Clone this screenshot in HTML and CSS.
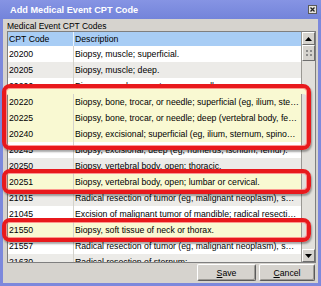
FILE: index.html
```html
<!DOCTYPE html>
<html lang="en">
<head>
    <meta charset="UTF-8">
    <title>Add Medical Event CPT Code</title>
    <link rel="stylesheet" href="styles.css">
</head>
<body>
    <div class="screen">
        <div class="window">
            <div class="titlebar">
                <span class="title">Add Medical Event CPT Code</span>
                <span class="close">
                    <svg width="9" height="9" viewBox="0 0 9 9">
                        <rect x="0.5" y="0.5" width="8" height="8" fill="#e4e2dc" stroke="#5a5a5a"/>
                        <path d="M2.5 2.5 L6.5 6.5 M6.5 2.5 L2.5 6.5" stroke="#222" stroke-width="1.3"/>
                    </svg>
                </span>
            </div>
            <div class="content">
                <div class="group-label">Medical Event CPT Codes</div>
                <div class="table">
                    <div class="grid">
                        <div class="head">
                            <div class="col-code">CPT Code</div>
                            <div class="col-desc">Description</div>
                        </div>
                        <div class="rows">
                            <div class="row"><div class="col-code">20200</div><div class="col-desc">Biopsy, muscle; superficial.</div></div>
                            <div class="row"><div class="col-code">20205</div><div class="col-desc">Biopsy, muscle; deep.</div></div>
                            <div class="row"><div class="col-code">20206</div><div class="col-desc">Biopsy, muscle, percutaneous needle.</div></div>
                            <div class="row marked"><div class="col-code">20220</div><div class="col-desc">Biopsy, bone, trocar, or needle; superficial (eg, ilium, sternum, spinous process, ribs).</div></div>
                            <div class="row marked"><div class="col-code">20225</div><div class="col-desc">Biopsy, bone, trocar, or needle; deep (vertebral body, femur).</div></div>
                            <div class="row marked"><div class="col-code">20240</div><div class="col-desc">Biopsy, excisional; superficial (eg, ilium, sternum, spinous process, ribs).</div></div>
                            <div class="row"><div class="col-code">20245</div><div class="col-desc">Biopsy, excisional; deep (eg, humerus, ischium, femur).</div></div>
                            <div class="row"><div class="col-code">20250</div><div class="col-desc">Biopsy, vertebral body, open; thoracic.</div></div>
                            <div class="row marked"><div class="col-code">20251</div><div class="col-desc">Biopsy, vertebral body, open; lumbar or cervical.</div></div>
                            <div class="row"><div class="col-code">21015</div><div class="col-desc">Radical resection of tumor (eg, malignant neoplasm), soft tissue of face or scalp.</div></div>
                            <div class="row"><div class="col-code">21045</div><div class="col-desc">Excision of malignant tumor of mandible; radical resection.</div></div>
                            <div class="row marked"><div class="col-code">21550</div><div class="col-desc">Biopsy, soft tissue of neck or thorax.</div></div>
                            <div class="row"><div class="col-code">21557</div><div class="col-desc">Radical resection of tumor (eg, malignant neoplasm), soft tissue of neck or thorax.</div></div>
                            <div class="row"><div class="col-code">21630</div><div class="col-desc">Radical resection of sternum;</div></div>
                        </div>
                    </div>
                    <div class="scrollbar">
                        <div class="arrow">
                            <svg width="7" height="4" viewBox="0 0 7 4"><path d="M3.5 0 L7 4 L0 4 Z" fill="#000"/></svg>
                        </div>
                        <div class="thumb">
                            <svg width="6" height="6" viewBox="0 0 6 6" fill="#8a8a8a">
                                <rect x="0" y="0" width="2" height="2"/><rect x="4" y="0" width="2" height="2"/>
                                <rect x="0" y="4" width="2" height="2"/><rect x="4" y="4" width="2" height="2"/>
                            </svg>
                        </div>
                        <div class="track"></div>
                        <div class="arrow">
                            <svg width="7" height="4" viewBox="0 0 7 4"><path d="M0 0 L7 0 L3.5 4 Z" fill="#000"/></svg>
                        </div>
                    </div>
                </div>
                <div class="buttons">
                    <button class="btn btn-save"><u>S</u>ave</button>
                    <button class="btn btn-cancel"><u>C</u>ancel</button>
                </div>
            </div>
        </div>

        <!-- annotation boxes drawn over the list -->
        <div class="mark mark-1"></div>
        <div class="mark mark-2"></div>
        <div class="mark mark-3"></div>
    </div>
</body>
</html>
```

FILE: styles.css
```css
* {
    box-sizing: border-box;
}
body {
    margin: 0;
    font-family: "Liberation Sans", Arial, sans-serif;
    font-size: 8.5px;
    color: #000;
}
.screen {
    position: relative;
    width: 321px;
    height: 286px;
    overflow: hidden;
}
.window {
    width: 321px;
    height: 286px;
    display: flex;
    flex-direction: column;
    background: #d6d3ce;
    border: 3px solid #7c88dc;
    border-top: 0;
}
.titlebar {
    height: 19px;
    margin: 0 -3px;
    padding: 0 4px 0 10px;
    display: flex;
    align-items: center;
    justify-content: space-between;
    background: linear-gradient(#8694e4, #7384da);
}
.title {
    color: #fff;
    font-weight: bold;
    font-size: 9.2px;
}
.close {
    display: flex;
    margin-top: -1px;
}
.content {
    flex: 1;
    display: flex;
    flex-direction: column;
    padding: 0 2px 0 4px;
}
.group-label {
    height: 12px;
    line-height: 12px;
    padding-top: 1px;
}
.table {
    height: 232px;
    display: flex;
    border: 1px solid #7f7f7f;
    background: #fff;
    font-size: 8.7px;
}
.grid {
    flex: 1;
    min-width: 0;
    overflow: hidden;
}
.head {
    height: 14px;
    display: flex;
    background: #a8cdf5;
    line-height: 14px;
}
.head .col-code {
    border-right: 1px solid #e8f2fc;
}
.row {
    height: 16px;
    display: flex;
    line-height: 16px;
    background: #fff;
}
.row:nth-child(even) {
    background: #ecebe8;
}
.row.marked {
    background: #f9f9d2;
}
.col-code {
    width: 66px;
    flex: none;
    padding-left: 1px;
    border-right: 1px solid #d4d2cc;
}
.col-desc {
    flex: 1;
    min-width: 0;
    padding-left: 1px;
    padding-right: 2px;
    white-space: nowrap;
    overflow: hidden;
    text-overflow: ellipsis;
}
.scrollbar {
    width: 14px;
    display: flex;
    flex-direction: column;
    background: #e2e0db;
    border-left: 1px solid #9a9893;
}
.arrow,
.thumb {
    display: flex;
    align-items: center;
    justify-content: center;
    background: #d6d3ce;
    border: 1px solid;
    border-color: #fff #6e6e6e #6e6e6e #fff;
}
.arrow {
    height: 13px;
}
.thumb {
    height: 16px;
}
.track {
    flex: 1;
}
.buttons {
    display: flex;
    justify-content: flex-end;
    gap: 3px;
    margin-top: 1px;
    padding-right: 1px;
}
.btn {
    height: 17px;
    padding: 0;
    font-family: inherit;
    font-size: 8.7px;
    color: #000;
    background: #d6d3ce;
    border: 1px solid;
    border-color: #fff #5a5a5a #5a5a5a #fff;
    border-radius: 2px;
    box-shadow: inset -1px -1px 0 #9c9a95;
}
.btn-save {
    width: 59px;
}
.btn-cancel {
    width: 56px;
}
.mark {
    position: absolute;
    left: 2px;
    width: 309px;
    border: 4px solid #e8191c;
    border-radius: 8px;
    box-shadow: 1px 2px 2px rgba(0, 0, 0, 0.35), inset 0 0 0 1px rgba(255, 110, 110, 0.7);
}
.mark-1 {
    top: 84px;
    height: 66px;
    box-shadow: 1px 2px 2px rgba(0, 0, 0, 0.35), inset 0 0 0 1px rgba(255, 110, 110, 0.7), inset 0 6px 0 #f9f9d2;
}
.mark-2 {
    top: 169px;
    height: 25px;
}
.mark-3 {
    top: 218px;
    height: 24px;
}
```
